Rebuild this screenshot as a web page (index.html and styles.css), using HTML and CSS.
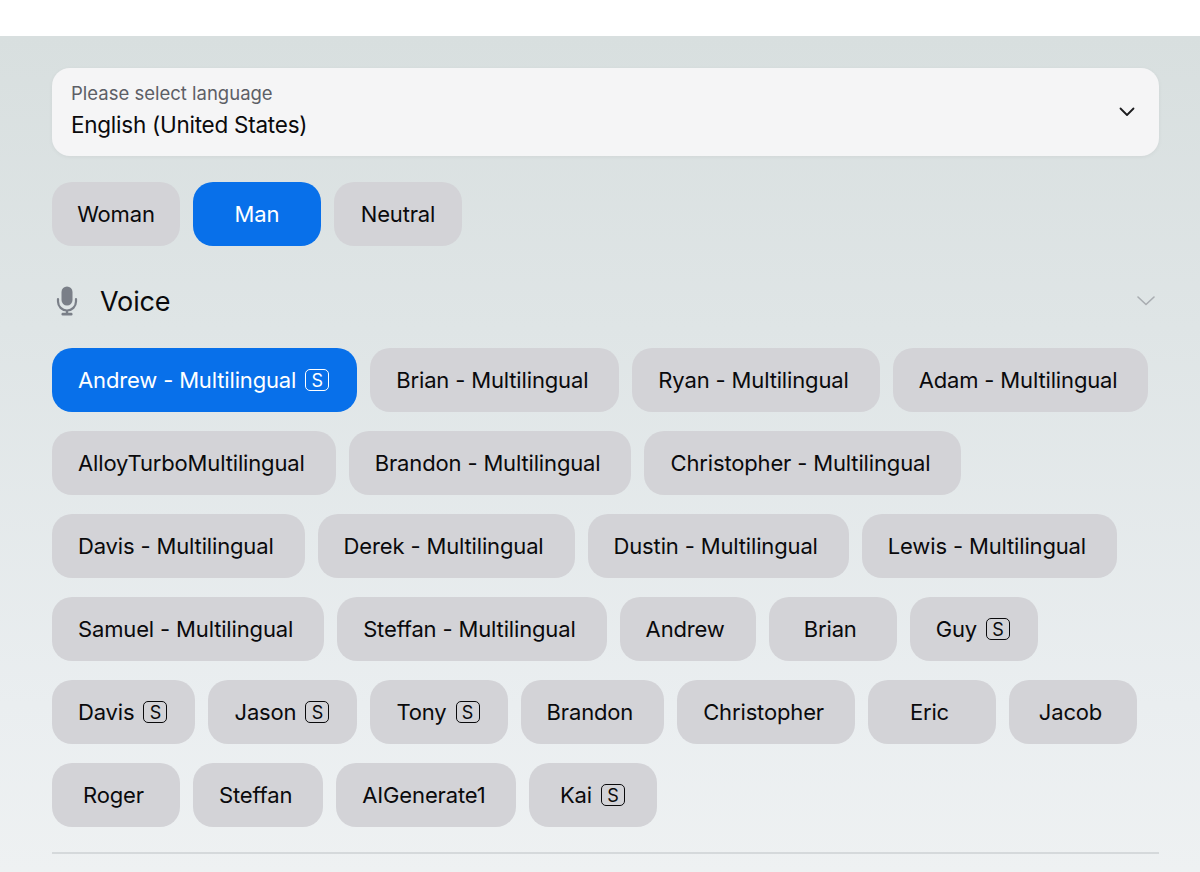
FILE: index.html
```html
<!DOCTYPE html>
<html lang="en">
<head>
<meta charset="utf-8">
<title>Voice settings</title>
<link rel="stylesheet" href="styles.css">
</head>
<body>
<div class="topbar"></div>
<main class="panel">
  <div class="select">
    <div class="select-text">
      <div class="select-label">Please select language</div>
      <div class="select-value">English (United States)</div>
    </div>
    <svg class="select-caret" width="16" height="10" viewBox="0 0 16 10"><path d="M1.5 1.5L8 8l6.5-6.5" fill="none" stroke="#1c1c1e" stroke-width="1.8" stroke-linecap="round" stroke-linejoin="round"/></svg>
  </div>
  <div class="chips gender">
    <button class="chip">Woman</button>
    <button class="chip active">Man</button>
    <button class="chip">Neutral</button>
  </div>
  <div class="section-head">
    <svg class="mic" width="22" height="30" viewBox="0 0 22 30"><rect x="5.5" y="0.5" width="11" height="19" rx="5.5" fill="#7a7f88"/><path d="M2 13v2.5a9 9 0 0 0 18 0V13" fill="none" stroke="#7a7f88" stroke-width="2.2" stroke-linecap="round"/><path d="M11 24.5v3" stroke="#7a7f88" stroke-width="2.4"/><rect x="5.5" y="26.8" width="11" height="2.6" rx="1.2" fill="#7a7f88"/></svg>
    <h2 class="section-title">Voice</h2>
    <svg class="section-caret" width="18" height="10" viewBox="0 0 18 10"><path d="M1 1l8 7.5L17 1" fill="none" stroke="#a9adb1" stroke-width="1.6" stroke-linecap="round" stroke-linejoin="round"/></svg>
  </div>
  <div class="chips voices">
    <button class="chip active has-badge">Andrew - Multilingual<span class="badge">S</span></button>
    <button class="chip">Brian - Multilingual</button>
    <button class="chip">Ryan - Multilingual</button>
    <button class="chip">Adam - Multilingual</button>
    <button class="chip">AlloyTurboMultilingual</button>
    <button class="chip">Brandon - Multilingual</button>
    <button class="chip">Christopher - Multilingual</button>
    <button class="chip">Davis - Multilingual</button>
    <button class="chip">Derek - Multilingual</button>
    <button class="chip">Dustin - Multilingual</button>
    <button class="chip">Lewis - Multilingual</button>
    <button class="chip">Samuel - Multilingual</button>
    <button class="chip">Steffan - Multilingual</button>
    <button class="chip">Andrew</button>
    <button class="chip">Brian</button>
    <button class="chip has-badge">Guy<span class="badge">S</span></button>
    <button class="chip has-badge">Davis<span class="badge">S</span></button>
    <button class="chip has-badge">Jason<span class="badge">S</span></button>
    <button class="chip has-badge">Tony<span class="badge">S</span></button>
    <button class="chip">Brandon</button>
    <button class="chip">Christopher</button>
    <button class="chip">Eric</button>
    <button class="chip">Jacob</button>
    <button class="chip">Roger</button>
    <button class="chip">Steffan</button>
    <button class="chip">AIGenerate1</button>
    <button class="chip has-badge">Kai<span class="badge">S</span></button>
  </div>
  <hr class="divider">
</main>
</body>
</html>
```
FILE: styles.css
```css
* { box-sizing: border-box; }
html, body { margin: 0; height: 100%; }
body {
  width: 1200px;
  height: 872px;
  overflow: hidden;
  background: #fff;
  font-family: Inter, "Noto Sans", sans-serif;
  color: #0a0a0c;
}
.topbar { height: 36px; background: #fff; }
.panel {
  height: 836px;
  padding: 32px 41px 0 52px;
  background: linear-gradient(180deg, #d8dfdf 0%, #dfe5e6 35%, #eaeef0 80%, #eef1f2 100%);
}
.select {
  display: flex;
  align-items: center;
  justify-content: space-between;
  height: 88px;
  padding: 0 24px 5px 19px;
  background: #f5f5f6;
  border-radius: 18px;
  box-shadow: 0 1px 4px rgba(0, 0, 0, 0.05);
}
.select-caret { margin-top: 4px; }
.select-label { font-size: 18.5px; line-height: 24px; color: #5d5f66; }
.select-value { font-size: 22.5px; line-height: 28px; margin-top: 6px; letter-spacing: -0.25px; }
.chips { display: flex; flex-wrap: wrap; column-gap: 13px; row-gap: 19px; }
.gender { margin-top: 26px; }
.chip {
  display: inline-flex;
  align-items: center;
  justify-content: center;
  height: 64px;
  min-width: 128px;
  padding: 0 24px;
  border: 0;
  border-radius: 20px;
  background: #d3d3d7;
  color: #0a0a0c;
  font: inherit;
  font-size: 22px;
  letter-spacing: -0.15px;
}
.chip.active { background: #0870ea; color: #fff; }
.voices .chip { padding: 0 31px 0 26px; }
.voices .chip.has-badge { padding-right: 26px; }
.badge {
  display: inline-flex;
  align-items: center;
  justify-content: center;
  width: 24px;
  height: 22px;
  margin: 0 2px 0 9px;
  border: 1.3px solid currentColor;
  border-radius: 5px;
  font-size: 18px;
  letter-spacing: 0;
}
.section-head {
  display: flex;
  align-items: center;
  height: 30px;
  margin-top: 40px;
  padding-left: 4px;
  padding-right: 4px;
}
.section-title { margin: 0 0 0 22px; font-size: 27px; font-weight: 400; letter-spacing: -0.15px; flex: 1; }
.voices { margin-top: 32px; }
.divider { height: 2px; margin: 25px 0 0; border: 0; background: #d5d9db; }
```
